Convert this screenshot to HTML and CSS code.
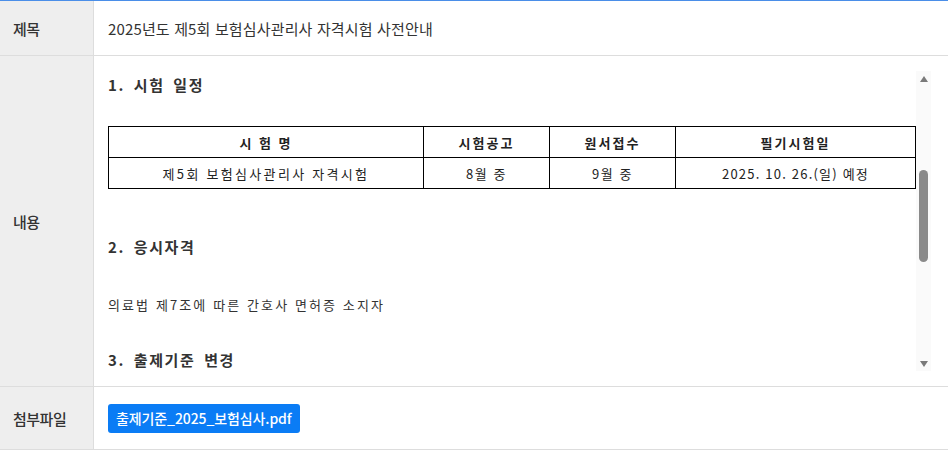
FILE: index.html
```html
<!DOCTYPE html>
<html lang="ko">
<head>
<meta charset="utf-8">
<title>보험심사관리사 자격시험 사전안내</title>
<link rel="stylesheet" href="styles.css">
</head>
<body>
<div class="board">
  <div class="row row-title">
    <div class="label">제목</div>
    <div class="value title-text">2025년도 제5회 보험심사관리사 자격시험 사전안내</div>
  </div>
  <div class="row row-content">
    <div class="label">내용</div>
    <div class="value content-cell">
      <div class="scroll-box">
        <div class="scroll-inner">
          <h3 class="sec">1. 시험 일정</h3>
          <table class="sched">
            <colgroup>
              <col class="c1"><col class="c2"><col class="c3"><col class="c4">
            </colgroup>
            <thead>
              <tr><th>시 험 명</th><th>시험공고</th><th>원서접수</th><th>필기시험일</th></tr>
            </thead>
            <tbody>
              <tr><td class="wide">제5회 보험심사관리사 자격시험</td><td>8월 중</td><td>9월 중</td><td class="date">2025. 10. 26.(일) 예정</td></tr>
            </tbody>
          </table>
          <h3 class="sec sec2">2. 응시자격</h3>
          <p class="para">의료법 제7조에 따른 간호사 면허증 소지자</p>
          <h3 class="sec sec3">3. 출제기준 변경</h3>
        </div>
        <div class="scrollbar">
          <div class="sb-btn"><span class="tri-up"></span></div>
          <div class="sb-gap-top"></div>
          <div class="sb-thumb"></div>
          <div class="sb-gap-bottom"></div>
          <div class="sb-btn"><span class="tri-down"></span></div>
        </div>
      </div>
    </div>
  </div>
  <div class="row row-file">
    <div class="label">첨부파일</div>
    <div class="value file-cell">
      <a class="file-btn" href="#">출제기준_2025_보험심사.pdf</a>
    </div>
  </div>
</div>
</body>
</html>
```

FILE: styles.css
```css
* { box-sizing: border-box; }
html, body { margin: 0; padding: 0; background: #ffffff; }
body {
  font-family: "Noto Sans CJK KR", "Noto Sans", sans-serif;
  color: #333333;
}
.board {
  border-top: 1px solid #4a8ee8;
  width: 948px;
}
.row {
  display: grid;
  grid-template-columns: 93px 1fr;
  border-bottom: 1px solid #dddddd;
}
.label {
  background: #eeeeee;
  border-right: 1px solid #dddddd;
  width: 94px;
  padding-left: 13px;
  display: flex;
  align-items: center;
  font-size: 15px;
  font-weight: 500;
  color: #333333;
  letter-spacing: -0.5px;
}
.value { padding-left: 15px; }
.row-title { height: 55px; }
.title-text {
  display: flex;
  align-items: center;
  font-size: 15px;
  letter-spacing: 0.15px;
  color: #333333;
}
.row-content { height: 331px; }
.content-cell {
  padding-top: 15px;
  padding-right: 16px;
}
.scroll-box {
  display: flex;
  height: 300px;
  width: 823px;
}
.scroll-inner {
  width: 808px;
  height: 300px;
  overflow: hidden;
  color: #222222;
}
.sec {
  margin: 5px 0 0 0;
  font-size: 15px;
  line-height: 18px;
  font-weight: 700;
  letter-spacing: 1.6px;
  word-spacing: 3px;
  color: #333333;
}
.sched {
  margin-top: 32px;
  width: 808px;
  border-collapse: collapse;
  font-size: 13px;
  color: #222222;
}
.sched col.c1 { width: 315px; }
.sched col.c2 { width: 126px; }
.sched col.c3 { width: 126px; }
.sched col.c4 { width: auto; }
.sched th, .sched td {
  border: 1px solid #000000;
  height: 31px;
  padding: 0;
  text-align: center;
  letter-spacing: 1.6px;
}
.sched td.wide { letter-spacing: 2.3px; }
.sched td.date { letter-spacing: 1.2px; }
.sched th { font-weight: 700; letter-spacing: 2px; }
.sec2 { margin-top: 49px; }
.para {
  margin: 40px 0 0 0;
  font-size: 13px;
  line-height: 18px;
  letter-spacing: 2.1px;
  color: #333333;
}
.sec3 { margin-top: 37px; }
.scrollbar {
  width: 15px;
  height: 300px;
  background: #fafafa;
  display: flex;
  flex-direction: column;
  align-items: center;
}
.sb-btn {
  width: 15px;
  height: 15px;
  display: flex;
  align-items: center;
  justify-content: center;
}
.tri-up {
  width: 0; height: 0;
  border-left: 4.5px solid transparent;
  border-right: 4.5px solid transparent;
  border-bottom: 6px solid #7a7a7a;
}
.tri-down {
  width: 0; height: 0;
  border-left: 4.5px solid transparent;
  border-right: 4.5px solid transparent;
  border-top: 6px solid #7a7a7a;
}
.sb-gap-top { height: 84px; }
.sb-thumb {
  width: 9px;
  height: 92px;
  background: #8a8a8a;
  border-radius: 5px;
}
.sb-gap-bottom { flex: 1; }
.row-file { height: 63px; }
.file-cell {
  display: flex;
  align-items: center;
}
.file-btn {
  display: inline-block;
  background: #0a7cf5;
  color: #ffffff;
  text-decoration: none;
  font-size: 14px;
  font-weight: 500;
  line-height: 21px;
  padding: 4px 8px;
  border-radius: 3px;
  letter-spacing: -0.1px;
  margin-top: 1px;
}
```
